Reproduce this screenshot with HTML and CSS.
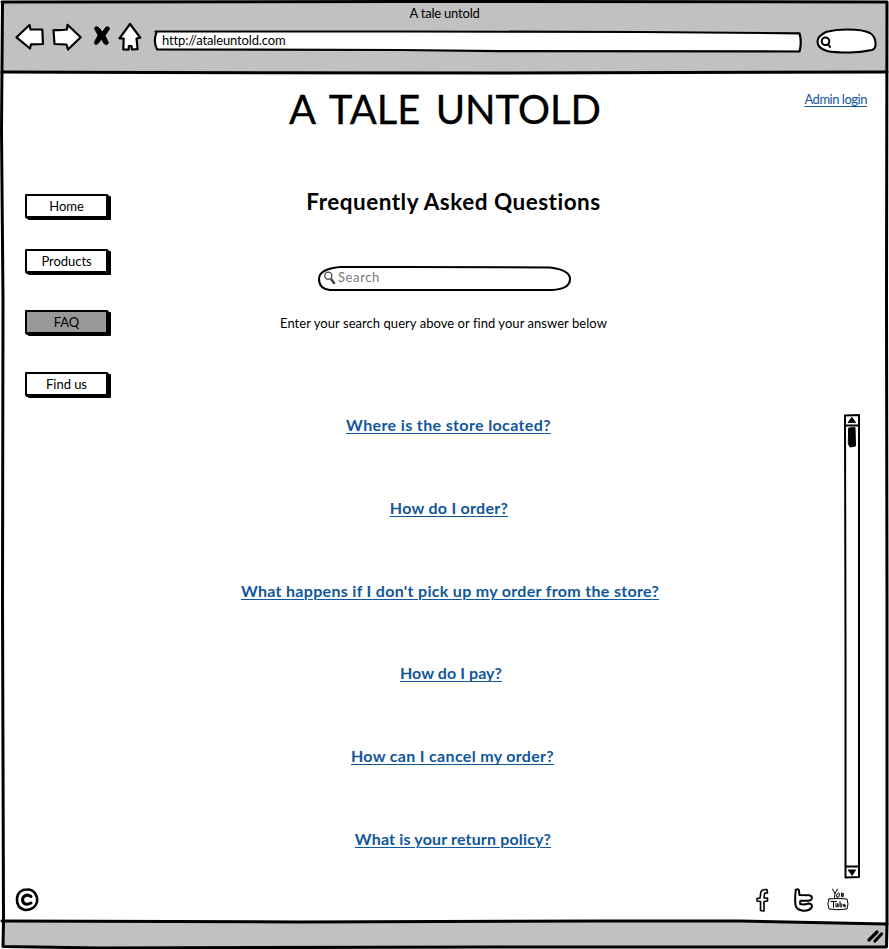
FILE: index.html
```html
<!DOCTYPE html>
<html lang="en">
<head>
<meta charset="utf-8">
<title>A tale untold</title>
<link rel="stylesheet" href="styles.css">
</head>
<body>
<div class="window">
  <svg class="frame" viewBox="0 0 889 949" aria-hidden="true">
    <path class="chrome-fill" d="M2 2H887V73H2zM2 921L600 921L887 923V947H2z"/>
    <path class="edge" d="M2 2L400 1.5L887 2L886.5 300L887 600L887 923L886.5 947L500 947L100 948L3 946.5L3.5 921L2.5 600L3 300L1.500 130L2.500 2z"/>
    <path class="edge" d="M2 72L150 72.500L500 73L887 72M2 921L300 922L600 921L740 921L887 924"/>
  </svg>
  <header class="chrome">
    <div class="window-title"><span class="t-window">A tale untold</span></div>
    <div class="toolbar">
      <svg class="ico back" viewBox="14 22 32 30"><path d="M16.500 37.300L29.500 25L30.500 29.500L42.300 29.500L43 44L31 44.300L30 48.500z"/></svg>
      <svg class="ico forward" viewBox="51 22 32 30"><path d="M53.500 30Q60 30.500 67 29.500L67.500 24.800L80.700 37.300L68 49.500L66.500 44.500L54.500 44z"/></svg>
      <svg class="ico stop" viewBox="92 22 20 30"><path d="M94.500 28Q96 25.500 98.500 27.500L102.500 32L106 27Q109.500 26 109.500 29L105 35.500L108.500 43Q107 46 104 43.500L101.500 39L98 43.500Q94.500 46 94.500 42L98 35.500z"/></svg>
      <svg class="ico home" viewBox="116 22 28 30"><path d="M130 24L140.300 37.700L136.500 38.500L137.600 49.200L132 49.500L131.500 46L129 46L128.500 49.700L123.300 49.500L123.700 38.500L119.500 38.300z"/></svg>
      <div class="address">
        <svg class="skin" viewBox="153 29 650 24"><path d="M155.500 31.500L400 31.500L640 32L799.500 33.300Q802 42 799.500 51.500L500 51.200L400 50L157 49.300Q153 42 156.500 32"/></svg>
        <span class="t-url">http://ataleuntold.com</span>
      </div>
      <svg class="quick" viewBox="815 27 63 27"><path class="pill" d="M848 29.500Q863 29.500 870 33Q875 36 875.500 43Q876 49 872 50Q860 52.500 850 52.500Q833 52.500 827 51Q817 48 817.500 41Q818 36 826 32Q835 29.500 848 29.500z"/><circle cx="825.500" cy="41.300" r="3.800"/><path d="M828 44L830 47"/></svg>
    </div>
  </header>
  <main class="page">
    <nav class="menu">
      <a class="btn b1">Home</a>
      <a class="btn b2">Products</a>
      <a class="btn b3 active">FAQ</a>
      <a class="btn b4">Find us</a>
    </nav>
    <section class="content">
      <h1>A TALE UNTOLD</h1>
      <h2>Frequently Asked Questions</h2>
      <div class="search">
        <svg class="skin" viewBox="317 265 255 27"><path d="M340 267L400 267L550 267.500Q570 270 570 279Q570 289 552 290L330 290Q319 289 319 279Q319 269 340 267z"/><g class="lens"><circle cx="328.300" cy="275.700" r="3.500"/><path class="handle" d="M331.500 279.500L334 283"/></g></svg>
        <span class="t-search">Search</span>
      </div>
      <p class="hint">Enter your search query above or find your answer below</p>
      <ul class="faq">
        <li class="q1"><a>Where is the store located?</a></li>
        <li class="q2"><a>How do I order?</a></li>
        <li class="q3"><a>What happens if I don't pick up my order from the store?</a></li>
        <li class="q4"><a>How do I pay?</a></li>
        <li class="q5"><a>How can I cancel my order?</a></li>
        <li class="q6"><a>What is your return policy?</a></li>
      </ul>
    </section>
    <aside class="side">
      <a class="login">Admin login</a>
      <svg class="scroll" viewBox="843 413 18 467"><path d="M845 415.500L859 415L859 877L845.500 877.500L845.500 650zM845 425.500H859M845.500 866.500H859"/><path class="solid" d="M852 417.500L855.500 422.500H848.500zM848.500 870H855.500L852.300 875zM849 428L855 427.500L855.500 446L850 447L848.500 444z"/></svg>
    </aside>
  </main>
  <div class="bottom">
    <svg class="copy" viewBox="14 886 26 26"><path d="M27 889.500C34 889 38 896 37 902C35 909 29 910 25 910C19 909 16.500 904 17 898C18 892 22 889.500 27 889.500z"/><path class="c" d="M31 896.500C27 893.500 22.500 896 22.500 900C23 904.500 27 905 31 903"/></svg>
    <svg class="social" viewBox="754 886 98 28">
      <path d="M767 889.500Q760 889 760.500 895L760 898L757 898.500L757 901L760.500 901.500L760.500 910.500L764 911L764 901.500L767.500 901L767.500 898L764 898L764.500 894Q765 892.500 767.500 893z"/>
      <path class="tw" d="M795.700 890Q797.500 888.500 798.800 890L799.500 895L809 895.300Q812.500 896 811.800 898.500Q811 900.700 808 900.700H800.500Q799.800 902 800.200 904Q804 905 808.500 903.500Q812.500 903.500 811.800 907Q810 911 803 910.700Q796.500 910 795.500 905Q794.700 900 795.700 890z"/>
      <g class="yt"><path d="M832.500 889L835 893.500L837.500 889M835 893.500L834.500 897.500M838 893Q835.500 895 837 897.500Q840 897.500 839.500 894zM841.500 893V896.500Q843.500 897.500 843 893V897"/><path d="M829 899Q838 898 847 899Q849 904 847 909Q838 910.500 829 909Q826.500 904 829 899zM831 901.500H836.500M833.500 901.500V907.500M836 903.500V907Q838.500 907 838 903.500V907M840 901.500V907Q842.500 907.500 842 904L840.500 904M843.500 905.500H845.500Q844.500 902.500 843.500 905Q843.500 907.500 845.500 907"/></g>
    </svg>
  </div>
  <footer class="status"><svg class="grip" viewBox="866 928 20 16"><path d="M869 940L877 932M875 941L881.500 934"/></svg></footer>
</div>
</body>
</html>
```
FILE: styles.css
```css
* { box-sizing: border-box; }
body { margin: 0; background: #fff; color: #000; font: 13px/16px Lato, "Liberation Sans", sans-serif; }
h1, h2, p, ul { margin: 0; padding: 0; font-weight: 400; }
ul { list-style: none; }
svg { display: block; flex: none; fill: none; stroke: #000; stroke-linecap: round; stroke-linejoin: round; }
.window { position: relative; width: 889px; height: 949px; overflow: hidden; display: flex; flex-direction: column; }
.frame { position: absolute; inset: 0; width: 889px; height: 949px; z-index: -1; }
.edge { stroke-width: 3; }
.chrome-fill { fill: #c1c1c1; stroke: none; }
.chrome { height: 73px; padding-top: 5px; }
.window-title { text-align: center; height: 17px; letter-spacing: -0.2px; }
.toolbar { display: flex; align-items: flex-start; padding-left: 14px; }
.ico { height: 30px; fill: #fff; stroke-width: 2.2; }
.back, .forward { width: 32px; }
.forward { margin-left: 5px; }
.stop { width: 20px; margin-left: 9px; fill: #000; stroke-width: 1; }
.home { width: 28px; margin-left: 4px; }
.address { position: relative; width: 650px; height: 24px; margin: 7px 0 0 9px; padding: 3px 0 0 9px; letter-spacing: -0.15px; }
.skin { position: absolute; inset: 0; z-index: -1; width: 100%; height: 100%; fill: #fff; stroke-width: 2.2; }
.quick { width: 63px; height: 27px; margin: 5px 0 0 12px; stroke-width: 2; }
.pill { fill: #fff; }
.page { display: grid; grid-template-columns: 112px 666px 111px; height: 807px; }
.menu { padding: 121px 0 0 25px; display: flex; flex-direction: column; align-items: flex-start; }
.btn { width: 83px; height: 24px; border: 2px solid #000; box-shadow: 3px 2px 0 #000, 1px 1px 0 #000; text-align: center; line-height: 20px; border-radius: 1px; letter-spacing: -0.05px; }
.b2 { margin-top: 31px; }
.b3 { margin-top: 37px; }
.b4 { margin-top: 38px; }
.active { background: #989898; }
.content { text-align: center; }
h1 { font-size: 40px; line-height: 48px; padding-top: 12px; word-spacing: 5px; -webkit-text-stroke: 0.3px #000; }
h2 { font-size: 22.5px; line-height: 28px; font-weight: 700; margin-top: 55px; padding-left: 17px; letter-spacing: 0.5px; }
.search { position: relative; width: 255px; height: 27px; margin: 49px auto 0 205px; padding: 4px 0 0 21px; text-align: left; color: #777681; letter-spacing: 0.6px; }
.search .skin { stroke-width: 2; }
.search .lens { stroke: #444; stroke-width: 1.3; }
.handle { stroke-width: 2.4; }
.hint { margin-top: 23px; padding-right: 3px; letter-spacing: 0.05px; }
.faq { margin-top: 84px; font-size: 16px; line-height: 20px; font-weight: 700; }
.faq li { height: 82.800px; }
.faq a, .login { color: #11579b; text-decoration: underline; text-decoration-thickness: 1px; text-underline-offset: 2px; }
.q1 { padding-left: 7px; letter-spacing: 0.37px; }
.q2 { padding-left: 8px; letter-spacing: 0.27px; }
.q3 { padding-left: 10px; letter-spacing: 0.31px; }
.q4 { padding-left: 12px; letter-spacing: 0.08px; }
.q5 { padding-left: 15px; letter-spacing: 0.32px; }
.q6 { padding-left: 16px; letter-spacing: 0.16px; }
.side { display: flex; flex-direction: column; padding: 18px 22px 0 0; text-align: right; }
.login { letter-spacing: -0.48px; }
.scroll { width: 18px; height: 467px; margin: 306px 0 0 65px; stroke-width: 2; }
.solid { fill: #000; stroke-width: 1; }
.bottom { display: flex; justify-content: space-between; height: 41px; padding: 6px 37px 0 14px; }
.copy { width: 26px; height: 26px; stroke-width: 2.600; }
.c { stroke-width: 3; }
.social { width: 98px; height: 28px; stroke-width: 1.600; }
.tw { stroke-width: 2; }
.yt { stroke-width: 1; }
.status { height: 28px; padding: 7px 3px 0 0; display: flex; justify-content: flex-end; }
.grip { width: 20px; height: 16px; stroke-width: 3.200; }
```
